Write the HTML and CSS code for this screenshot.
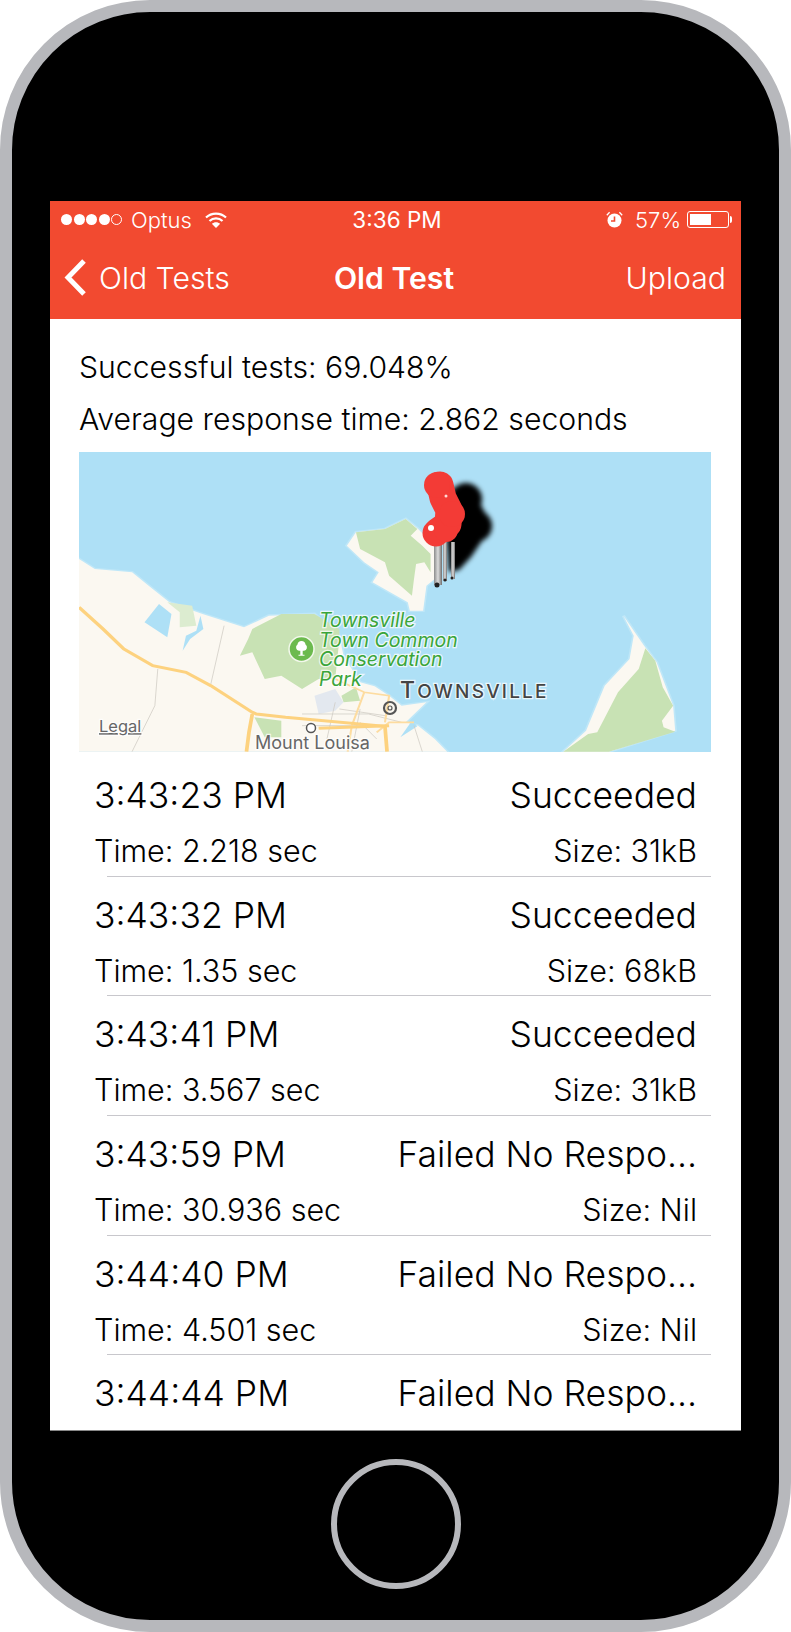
FILE: index.html
```html
<!DOCTYPE html>
<html lang="en">
<head>
  <meta charset="UTF-8" />
  <title>Old Test</title>
  <link rel="stylesheet" href="styles.css">
</head>
<body>
  <div class="phone">
    <div class="screen">
      <div class="topbar">
        <div class="status">
          <div class="status-left">
            <span class="dots"><i></i><i></i><i></i><i></i><i class="off"></i></span>
            <span>Optus</span>
            <svg class="wifi" width="22" height="16" viewBox="0 0 22 16">
              <path d="M1 5.5C6.5 .2 15.500 .2 21 5.500" fill="none" stroke="#fff" stroke-width="2.200"/>
              <path d="M4.500 9C8.200 5.500 13.800 5.500 17.500 9" fill="none" stroke="#fff" stroke-width="2.200"/>
              <path d="M11 16L6.800 11.800C9.200 9.700 12.800 9.700 15.200 11.800Z" fill="#fff"/>
            </svg>
          </div>
          <div class="status-time">3:36 PM</div>
          <div class="status-right">
            <svg class="alarm" width="17" height="17" viewBox="0 0 17 17">
              <circle cx="8.500" cy="9.500" r="7" fill="#fff"/>
              <path d="M8.500 5.500V10H5" fill="none" stroke="#f24a30" stroke-width="1.600"/>
              <path d="M.8 4.200L3.600 1.200M16.200 4.200L13.400 1.200" stroke="#fff" stroke-width="1.300"/>
            </svg>
            <span>57%</span>
            <span class="battery"><span class="battery-fill"></span></span>
          </div>
        </div>
        <div class="nav">
          <div class="nav-back">
            <svg width="26" height="37" viewBox="0 0 26 37">
              <path d="M22 2L6 18.500L22 35" fill="none" stroke="#fff" stroke-width="5"/>
            </svg>
            <span>Old Tests</span>
          </div>
          <div class="nav-title">Old Test</div>
          <div class="nav-action">Upload</div>
        </div>
      </div>

      <div class="summary">
        <p>Successful tests: 69.048%</p>
        <p>Average response time: 2.862 seconds</p>
      </div>

      <svg class="map" width="632" height="300" viewBox="0 0 632 300">
        <defs>
          <filter id="blur"><feGaussianBlur stdDeviation="2.500"/></filter>
          <linearGradient id="needle" x1="0" x2="1" y1="0" y2="0">
            <stop offset="0" stop-color="#8b8b8b"/>
            <stop offset="0.5" stop-color="#dcdcdc"/>
            <stop offset="1" stop-color="#6f6f6f"/>
          </linearGradient>
        </defs>
        <rect width="632" height="300" fill="#aee0f6"/>

        <!-- shapes are traced at 2.412 x 3, so scale them back -->
        <g transform="translate(-9.120,-13) scale(0.4146,0.3333)">
          <path class="land" d="M22 360L60 390L150 400L190 440L240 490L320 525L420 565L480 530L590 525L650 590L660 650L700 730L735 742L770 770L800 800L860 790L810 850L840 860L880 900L910 938L22 938Z"/>
          <path class="water" d="M180 550L215 495L245 525L235 595Z"/>
          <path class="water" d="M272 635L280 590L305 575L315 530L322 570L290 600Z"/>
          <path class="water" d="M797 895L825 845L838 862Z"/>
          <path class="park-light" d="M235 490L295 500L305 560L265 565L265 520Z"/>
          <path class="park" d="M440 570L510 525L590 525L650 570L650 600L640 720L600 720L560 750L510 710L470 720L440 640L410 650L430 600Z"/>
          <path class="park" d="M445 835L510 845L510 895L470 895Z"/>
          <path class="park" d="M655 770L690 745L700 785L660 790Z"/>
          <path class="lake" d="M590 770L640 750L660 790L640 815L600 825Z"/>

          <path class="land" d="M668 320L690 280L760 270L810 240L840 270L880 320L880 420L860 440L852 515L820 515L815 490L730 430L745 400L710 370Z"/>
          <path class="park" d="M690 280L760 270L810 240L838 270L822 290L850 320L870 345L870 400L855 370L835 375L830 420L825 470L770 410L760 370L700 330Z"/>

          <path class="land" d="M1190 938L1245 875L1290 740L1350 660L1360 590L1335 530L1385 620L1415 670L1455 800L1460 875L1300 938Z"/>
          <path class="park" d="M1190 938L1250 885L1272 880L1322 760L1372 690L1388 628L1412 665L1430 745L1455 800L1428 845L1432 865L1460 878L1300 938Z"/>

          <g class="street">
            <path d="M372 560L340 735"/>
            <path d="M212 690L205 800L150 938"/>
            <path d="M560 825H720L800 850M640 790L620 900M700 810L680 938M560 860H760M830 860L850 938M650 810L760 830M700 850L740 900"/>
          </g>
          <g class="road-thin">
            <path d="M640 720L710 760L770 770L760 850M710 760L680 860L670 938M830 850H770L740 880"/>
          </g>
          <g class="road">
            <path d="M22 505L80 570L130 630L200 680L280 700L340 740L440 820L450 825L520 835L760 862L765 938"/>
            <path d="M440 825L432 880L426 938"/>
            <path d="M600 868L770 860"/>
          </g>
        </g>

        <g class="pins">
          <g class="shadow" filter="url(#blur)">
            <circle cx="387" cy="47" r="16"/>
            <circle cx="397" cy="74" r="16"/>
            <path d="M375 35L395 40L413 74L392 105L380 118L370 120L366 60Z"/>
          </g>
          <rect x="372" y="90" width="4" height="37" fill="url(#needle)"/>
          <rect x="364" y="90" width="4" height="39" fill="url(#needle)"/>
          <rect x="355" y="90" width="8" height="43" fill="url(#needle)"/>
          <circle cx="358" cy="133" r="2.500" fill="#222"/>
          <circle cx="366" cy="128" r="1.500" fill="#222"/>
          <circle cx="373" cy="126" r="1.500" fill="#222"/>
          <path class="blob" d="M361 33L364 46L370 58L369 72L359 79L357 81"/>
          <circle class="blob-part" cx="367" cy="78" r="12"/>
          <circle class="blob-part" cx="358" cy="33" r="13"/>
          <circle class="blob-part" cx="373" cy="62" r="13"/>
          <circle cx="352" cy="76" r="3" fill="#fff"/>
          <circle cx="367" cy="44" r="1.500" fill="#ffd9d6"/>
        </g>

        <circle cx="222.500" cy="197" r="12.500" fill="#6cba4e" stroke="#f3f8ec" stroke-width="1.500"/>
        <path d="M222.500 189a4 4 0 0 1 4 3.500a3.500 3.500 0 0 1-1.500 6.300h-1.300v4h1.800v1h-6v-1h1.800v-4H220a3.500 3.500 0 0 1-1.500-6.300a4 4 0 0 1 4-3.500Z" fill="#fff"/>

        <text class="lbl-park" x="240" y="175">Townsville<tspan x="240" dy="20">Town Common</tspan><tspan x="240" dy="19">Conservation</tspan><tspan x="240" dy="20">Park</tspan></text>

        <circle cx="311" cy="256" r="6" fill="none" stroke="#555" stroke-width="2.200"/>
        <circle cx="311" cy="256" r="2" fill="none" stroke="#555" stroke-width="1.200"/>
        <text class="lbl-city" x="321" y="246">T<tspan class="lbl-city-sm">OWNSVILLE</tspan></text>

        <circle cx="232" cy="276" r="4.500" fill="#fff" stroke="#555" stroke-width="1.500"/>
        <text class="lbl-town" x="176" y="297">Mount Louisa</text>
        <text class="lbl-legal" x="20" y="280">Legal</text>
      </svg>

      <div class="list">
        <div class="row">
          <div class="line-main"><span>3:43:23 PM</span><span>Succeeded</span></div>
          <div class="line-sub"><span>Time: 2.218 sec</span><span>Size: 31kB</span></div>
        </div>
        <div class="row">
          <div class="line-main"><span>3:43:32 PM</span><span>Succeeded</span></div>
          <div class="line-sub"><span>Time: 1.35 sec</span><span>Size: 68kB</span></div>
        </div>
        <div class="row">
          <div class="line-main"><span>3:43:41 PM</span><span>Succeeded</span></div>
          <div class="line-sub"><span>Time: 3.567 sec</span><span>Size: 31kB</span></div>
        </div>
        <div class="row">
          <div class="line-main"><span>3:43:59 PM</span><span>Failed No Respo…</span></div>
          <div class="line-sub"><span>Time: 30.936 sec</span><span>Size: Nil</span></div>
        </div>
        <div class="row">
          <div class="line-main"><span>3:44:40 PM</span><span>Failed No Respo…</span></div>
          <div class="line-sub"><span>Time: 4.501 sec</span><span>Size: Nil</span></div>
        </div>
        <div class="row">
          <div class="line-main"><span>3:44:44 PM</span><span>Failed No Respo…</span></div>
        </div>
      </div>
    </div>
    <div class="home-wrap"><div class="home"></div></div>
  </div>
</body>
</html>
```
FILE: styles.css
```css
* {
  box-sizing: border-box;
}

body {
  margin: 0;
  background: #fff;
  font-family: 'Inter', 'Liberation Sans', sans-serif;
  color: #000;
}

.phone {
  width: 791px;
  height: 1632px;
  background: #000;
  border: 12px solid #b7b8bc;
  border-radius: 150px;
  padding: 189px 38px 0;
  overflow: hidden;
}

.screen {
  width: 691px;
  height: 1230px;
  background: #fff;
  border-bottom: 1px solid #888;
  overflow: hidden;
}

.topbar {
  height: 118px;
  background: #f24a30;
  color: #fff;
}

.status {
  height: 37px;
  padding: 0 12px 0 11px;
  display: grid;
  grid-template-columns: 1fr auto 1fr;
  align-items: center;
  font-size: 22px;
  font-weight: 300;
}

.status-left {
  display: flex;
  align-items: center;
  gap: 9px;
}

.dots {
  display: flex;
  gap: 1.5px;
}

.dots i {
  width: 11px;
  height: 11px;
  border-radius: 50%;
  background: #fff;
}

.dots i.off {
  background: none;
  border: 1px solid #fff;
}

.wifi {
  margin-left: 4px;
}

.status-time {
  font-size: 22.5px;
  font-weight: 400;
  padding-left: 4px;
}

.status-right {
  display: flex;
  align-items: center;
  justify-content: flex-end;
  gap: 6px;
}

.alarm {
  margin-right: 6px;
}

.battery {
  width: 42px;
  height: 17px;
  border: 1px solid #fff;
  border-radius: 3px;
  padding: 2px;
  position: relative;
}

.battery::after {
  content: "";
  position: absolute;
  right: -4px;
  top: 4px;
  width: 2px;
  height: 7px;
  background: #fff;
  border-radius: 0 2px 2px 0;
}

.battery-fill {
  display: block;
  width: 21px;
  height: 100%;
  background: #fff;
}

.nav {
  height: 81px;
  padding: 0 15px 2px 12px;
  display: grid;
  grid-template-columns: 1fr auto 1fr;
  align-items: center;
  font-size: 30.2px;
  font-weight: 300;
}

.nav-back {
  display: flex;
  align-items: center;
  gap: 11px;
}

.nav-title {
  font-weight: 600;
}

.nav-action {
  text-align: right;
}

.summary {
  padding: 31px 29px 0;
  font-size: 30.2px;
  font-weight: 300;
}

.summary p {
  margin: 0 0 18px;
  line-height: 34px;
}

.map {
  display: block;
  margin: -2px 0 0 29px;
}

.land {
  fill: #fbf8f1;
  stroke: #bfe7f8;
  stroke-width: 8;
  paint-order: stroke;
}

.water {
  fill: #aee0f6;
}

.park {
  fill: #c8e2b4;
}

.park-light {
  fill: #dcecd0;
}

.lake {
  fill: #e3e8ef;
}

.street path {
  fill: none;
  stroke: #cfcbc3;
  stroke-width: 2;
}

.road-thin path {
  fill: none;
  stroke: #fddca0;
  stroke-width: 5;
}

.road path {
  fill: none;
  stroke: #fdd27f;
  stroke-width: 9;
}

.shadow {
  fill: #050505;
}

.blob {
  fill: none;
  stroke: #f33b36;
  stroke-width: 27;
  stroke-linecap: round;
  stroke-linejoin: round;
}

.blob-part {
  fill: #f33b36;
}

.map text {
  paint-order: stroke;
  stroke: rgba(255, 255, 255, 0.75);
  stroke-width: 2.5px;
}

.lbl-park {
  font-size: 19.500px;
  font-style: italic;
  fill: #3aa53a;
}

.lbl-city {
  font-size: 23px;
  font-weight: 500;
  letter-spacing: 2.2px;
  fill: #444;
}

.lbl-city-sm {
  font-size: 19px;
}

.lbl-town {
  font-size: 18px;
  fill: #666;
}

.lbl-legal {
  font-size: 16.500px;
  fill: #666;
  text-decoration: underline;
}

.list {
  margin-top: 5px;
}

.row {
  height: 119.7px;
  padding: 19px 44px 0 44px;
  position: relative;
}

.row::after {
  content: "";
  position: absolute;
  left: 57px;
  right: 30px;
  bottom: 0;
  height: 1px;
  background: #c8c7cc;
}

.line-main,
.line-sub {
  display: flex;
  justify-content: space-between;
  font-weight: 300;
}

.line-main {
  height: 40px;
  line-height: 40px;
  font-size: 35.5px;
}

.line-sub {
  margin-top: 19px;
  height: 32px;
  line-height: 32px;
  font-size: 30.5px;
}

.home-wrap {
  display: flex;
  justify-content: center;
  padding-top: 28px;
}

.home {
  width: 130px;
  height: 130px;
  border: 6px solid #b7b8bc;
  border-radius: 50%;
}
```
